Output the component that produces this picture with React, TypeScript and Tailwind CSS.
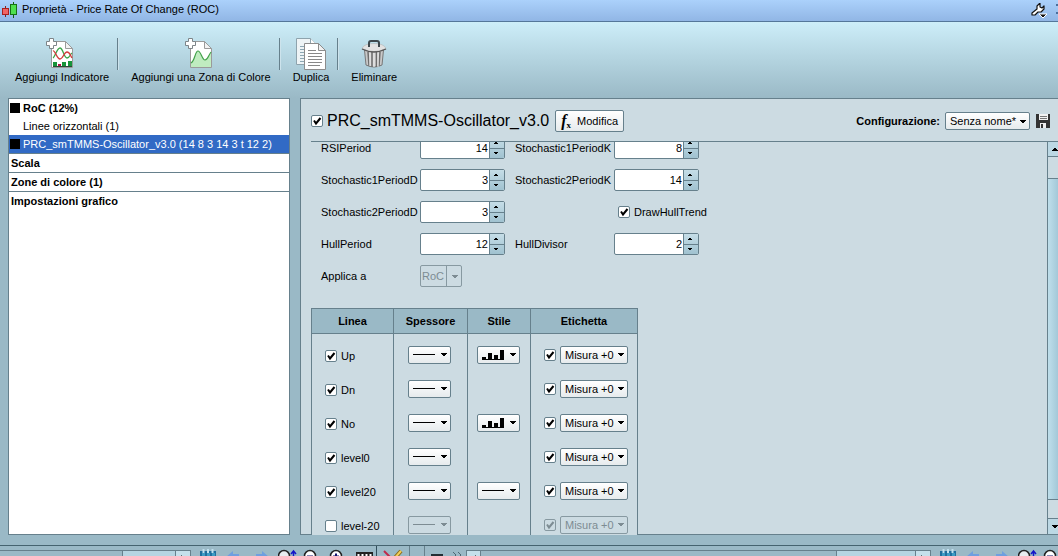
import { useState } from 'react';
import type { ReactNode } from 'react';

const treeItems = [
    { name: 'RoC (12%)', square: true, bold: true },
    { name: 'Linee orizzontali (1)', square: false, bold: false },
    { name: 'PRC_smTMMS-Oscillator_v3.0 (14 8 3 14 3 t 12 2)', square: true, bold: false },
];

const sections = ['Scala', 'Zone di colore (1)', 'Impostazioni grafico'];

const lines = [
    { name: 'Up', enabled: true, style: 'bars' },
    { name: 'Dn', enabled: true, style: '' },
    { name: 'No', enabled: true, style: 'bars' },
    { name: 'level0', enabled: true, style: '' },
    { name: 'level20', enabled: true, style: 'line' },
    { name: 'level-20', enabled: false, style: '' },
];

const Arrow = ({ up = false }: { up?: boolean }) => (
    <svg className="w-[6px] h-[3px] shrink-0" viewBox="0 0 6 3" fill="currentColor" shapeRendering="crispEdges">
        {up ? <path d="M2 0h2v1h1v1h1v1H0V2h1V1h1z" /> : <path d="M0 0h6v1H5v1H4v1H2V2H1V1H0z" />}
    </svg>
);

const PageShape = () => (
    <>
        <path d="M5.500 3.500h14l7 7v19h-21z" fill="#fff" stroke="#9a9a9a" />
        <path d="M19.500 3.500v7h7z" fill="#f2f2f2" stroke="#9a9a9a" />
    </>
);

const PlusShape = () => (
    <path d="M3.500 .5h4v3h3v4h-3v3h-4v-3h-3v-4h3z" fill="#fff" stroke="#7d8589" />
);

const IndicatorIcon = () => (
    <svg className="w-7 h-8 mr-1" viewBox="0 0 28 32" fill="none">
        <PageShape />
        <path d="M7 20c2-1 4-10 7-10s4 10 7 10 3-4 5-5" stroke="#3aa648" strokeWidth="1.300" />
        <path d="M7 13c2-1 4 8 7 8s4-7 7-7 3 3 5 6" stroke="#d23b3b" strokeWidth="1.300" />
        <path d="M7 24h4v5H7zM16 24h4v5h-4zM22 23h4v6h-4z" fill="#16943a" />
        <path d="M12 26h3v3h-3z" fill="#b3144a" />
        <path d="M7 28.500h19" stroke="#274a38" />
        <PlusShape />
    </svg>
);

const ZoneIcon = () => (
    <svg className="w-7 h-8 mr-1" viewBox="0 0 28 32" fill="none">
        <PageShape />
        <path d="M6 25c4-2 4-12 7-12s4 9 7 9 3-4 6-8v15H6z" fill="#c0ecc0" />
        <path d="M6 25c4-2 4-12 7-12s4 9 7 9 3-4 6-8" stroke="#43a14b" strokeWidth="1.200" />
        <PlusShape />
    </svg>
);

const DuplicateIcon = () => (
    <svg className="w-[30px] h-8" viewBox="0 0 30 32" fill="none">
        <path d="M.5 .5h14l6 6v20H.5z" fill="#eef4f6" stroke="#8ea3ad" />
        <path d="M14.500 .5v6h6" fill="#fff" stroke="#8ea3ad" />
        <path d="M4 8.500h6M4 11.500h6M4 14.500h6M4 17.500h6M4 20.500h6M4 23.500h6" stroke="#8da7b3" />
        <path d="M8.500 5.500h14l7 7v19h-21z" fill="#fff" stroke="#8c8c8c" />
        <path d="M22.500 5.500v7h7z" fill="#f0f0f0" stroke="#8c8c8c" />
        <path d="M12 12.500h8M12 15.500h14M12 18.500h14M12 21.500h14M12 24.500h14M12 27.500h12" stroke="#888" />
    </svg>
);

const TrashIcon = () => (
    <svg className="w-[26px] h-8" viewBox="0 0 26 32" fill="none">
        <path d="M3.500 12h19l-1.500 15q-8 4-16 0z" fill="#c9c9c9" stroke="#777" />
        <path d="M7 14l1 14M11 14v15M15.500 14v15M19 14l-1 14" stroke="#6d6d6d" strokeWidth="1.500" />
        <path d="M9 14v14M13 14v15M17 14v15" stroke="#f2f2f2" />
        <path d="M1 10.500q2-5 12-5t12 5q-12 6-24 0z" fill="#e2e2e2" stroke="#aaa" strokeWidth=".5" />
        <path d="M1 11q12 6 24 0" stroke="#555" strokeWidth="1.300" />
        <path d="M8 9V5q0-2 2-2h6q2 0 2 2v4" stroke="#3e484d" strokeWidth="2" />
    </svg>
);

const tools = [
    { label: 'Aggiungi Indicatore', icon: <IndicatorIcon /> },
    { label: 'Aggiungi una Zona di Colore', icon: <ZoneIcon /> },
    { label: 'Duplica', icon: <DuplicateIcon /> },
    { label: 'Eliminare', icon: <TrashIcon /> },
];

const CheckBox = ({ id, on, label, disabled = false }: { id: string; on: boolean; label?: string; disabled?: boolean }) => {
    const [checked, setChecked] = useState(on);

    return (
        <span className="relative flex shrink-0">
            <input
                id={id}
                type="checkbox"
                aria-label={label}
                checked={checked}
                disabled={disabled}
                onChange={() => setChecked(!checked)}
                className="appearance-none w-3 h-3 border border-[#66808c] rounded-[2px] bg-white disabled:bg-transparent disabled:border-[#8799a1]"
            />
            {checked && (
                <svg className={`absolute inset-0 w-3 h-3 pointer-events-none ${disabled ? 'text-[#7d8c93]' : 'text-black'}`} viewBox="0 0 12 12" fill="none">
                    <path d="M3 5.500L5 8.500L9.500 3" stroke="currentColor" strokeWidth="2" />
                </svg>
            )}
        </span>
    );
};

const Spinner = ({ name, start }: { name: string; start: number }) => {
    const [value, setValue] = useState(start);

    return (
        <>
            <label htmlFor={name} className="whitespace-nowrap">{name}</label>
            <div className="flex w-[85px] h-[22px] border border-[#66808c] rounded-[2px] bg-white overflow-hidden">
                <input
                    id={name}
                    value={value}
                    onChange={(e) => setValue(Number(e.target.value) || 0)}
                    className="min-w-0 flex-1 pr-px text-right outline-none"
                />
                <div className="flex flex-col w-[15px] border-l border-[#66808c] bg-linear-to-b from-[#c5dde7] to-[#a0c2d0]">
                    <button aria-label={`${name} +`} onClick={() => setValue(value + 1)} className="flex flex-1 items-center justify-center pr-0.5 border-b border-[#66808c]">
                        <svg className="w-1 h-0.5" viewBox="0 0 4 2" shapeRendering="crispEdges">
                            <path d="M1 0h2v1h1v1H0V1h1z" />
                        </svg>
                    </button>
                    <button aria-label={`${name} -`} onClick={() => setValue(value - 1)} className="flex flex-1 items-center justify-center pr-0.5">
                        <svg className="w-1 h-0.5" viewBox="0 0 4 2" shapeRendering="crispEdges">
                            <path d="M0 0h4v1H3v1H1V1H0z" />
                        </svg>
                    </button>
                </div>
            </div>
        </>
    );
};

const Picker = ({ label, children, disabled = false }: { label: string; children: ReactNode; disabled?: boolean }) => (
    <button
        aria-label={label}
        disabled={disabled}
        className="flex items-center justify-between w-[43px] h-[18px] pl-1 pr-[3px] border border-[#66808c] rounded-[2px] bg-linear-to-b from-white to-[#e6ebed] disabled:bg-none disabled:border-[#8799a1] disabled:text-[#7d8c93]"
    >
        {children}
        <Arrow />
    </button>
);

const LineSample = () => <span className="w-[22px] h-px bg-current"></span>;

const BarsSample = () => (
    <svg className="w-[22px] h-[10px]" viewBox="0 0 22 10" shapeRendering="crispEdges">
        <path d="M0 7h4v3H0zM6 3h4v7H6zM12 5h4v5h-4zM18 0h4v10h-4zM0 9h22v1H0z" />
    </svg>
);

const SmallSelect = ({ id, label, option, size, disabled = false }: { id: string; label?: string; option: string; size: string; disabled?: boolean }) => (
    <span className={`relative flex items-center ${size} ${disabled ? 'text-[#7d8c93]' : 'text-black'}`}>
        <select
            id={id}
            aria-label={label}
            disabled={disabled}
            className="appearance-none w-full h-full pl-1 border border-[#66808c] rounded-[2px] bg-linear-to-b from-white to-[#e6ebed] disabled:bg-none disabled:border-[#8799a1] disabled:opacity-100"
        >
            <option>{option}</option>
        </select>
        <span className="absolute right-1 pointer-events-none">
            <Arrow />
        </span>
    </span>
);

const ChartTools = () => (
    <svg className="w-[78px] h-3 shrink-0" viewBox="0 0 78 12" fill="none">
        <path d="M0 2h16v10H0z" fill="#1f6f9e" />
        <path d="M2 4h3v3H2zM7 4h3v3H7zM12 4h3v3h-3z" fill="#3c9cc4" />
        <path d="M3.500 0v4M8 0v4M12.500 0v4" stroke="#bfe0ee" strokeWidth="2" />
        <path d="M26 8l7-6v3h6v7H28z" fill="#6f9fdf" />
        <path d="M69 8l-7-6v3h-6v7h10z" fill="#6f9fdf" />
    </svg>
);

const ZoomTools = () => (
    <svg className="w-[98px] h-3 shrink-0" viewBox="0 0 98 12" fill="none">
        <circle cx="6" cy="7" r="5.500" fill="#e8edf0" stroke="#222" strokeWidth="1.500" />
        <path d="M15.500 12V3M13 5l2.500-3L18 5" stroke="#1414c8" strokeWidth="1.500" />
        <circle cx="32" cy="7" r="5.500" fill="#fff" stroke="#222" strokeWidth="1.500" />
        <path d="M29 7.500h6" stroke="#14146e" strokeWidth="2" />
        <circle cx="58" cy="7" r="5.500" fill="#fff" stroke="#222" strokeWidth="1.500" />
        <path d="M55 7.500h6M58 4.500v6" stroke="#14146e" strokeWidth="2" />
        <path d="M78 3h17v9H78z" fill="#222" />
        <path d="M80.500 5v7M84.500 5v7M88.500 5v7M92.500 5v7" stroke="#fff" strokeWidth="2" />
    </svg>
);

const BarThumb = ({ size }: { size: string }) => (
    <>
        <span className={`${size} border-l border-r border-[#66808c] bg-[#b5d5e2]`}></span>
        <span className="flex justify-center w-[15px] pt-1 border-r border-[#66808c] bg-[#c5e0eb]">
            <svg className="w-1 h-2" viewBox="0 0 4 8"><path d="M0 0l4 4-4 4z" /></svg>
        </span>
    </>
);

const App = () => {
    const [selected, setSelected] = useState(2);

    return (
        <div
            className="flex flex-col h-screen overflow-hidden bg-[#9ab9c6] text-[11px] leading-[14px] text-black"
            style={{ fontFamily: '"Liberation Sans", Arial, sans-serif' }}
        >
            {/* Title bar */}
            <header className="flex items-center h-[22px] shrink-0 pl-0.5 pb-1 border-b border-[#54779a] bg-linear-to-b from-[#abd1fb] to-[#91b6e5]">
                <svg className="w-4 h-4 mr-1 mt-0.5" viewBox="0 0 16 16" shapeRendering="crispEdges">
                    <path d="M3 4h1v11H3z" fill="#8a1c1c" />
                    <path d="M.5 6.500h6v6h-6z" fill="#f06464" stroke="#a82020" />
                    <path d="M11 0h1v16h-1z" fill="#126012" />
                    <path d="M8.500 2.500h6v10h-6z" fill="#4fe04f" stroke="#187018" />
                </svg>
                <h1>Proprietà - Price Rate Of Change (ROC)</h1>
                <button aria-label="Impostazioni" className="ml-auto mr-2">
                    <svg className="w-4 h-4 mt-1" viewBox="0 0 16 16" fill="none">
                        <path d="M1 10l5-4V3l3-3v4l2 1 2-2v3l-3 3H7l-3 3H1z" fill="#fff" stroke="#111" strokeWidth="1.200" strokeLinejoin="round" />
                        <path d="M8 11h8l-4 4z" fill="#111" stroke="#fff" strokeWidth="1" />
                    </svg>
                </button>
                <svg className="w-[3px] h-3" viewBox="0 0 3 12">
                    <path d="M1 1h2v2H1zM1 9h2v2H1z" fill="#4a6f9c" />
                </svg>
            </header>

            {/* Toolbar */}
            <nav className="flex items-start h-[76px] shrink-0 pt-4 pl-[15px] bg-linear-to-b from-[#cdeef9] to-[#9ab9c6]">
                {tools.map((tool, index) => (
                    <div key={tool.label} className="flex">
                        {index > 0 && <span className="w-0.5 h-8 ml-2 mr-3 border-l border-r border-l-[#66808c] border-r-[#cde3ec]"></span>}
                        <button className="flex flex-col items-center">
                            {tool.icon}
                            <span>{tool.label}</span>
                        </button>
                    </div>
                ))}
            </nav>

            <main className="flex flex-1 min-h-0 gap-2.5 pl-2">
                {/* Tree */}
                <aside className="w-[282px] shrink-0 border border-[#66808c] bg-white">
                    {treeItems.map((item, index) => (
                        <button
                            key={item.name}
                            onClick={() => setSelected(index)}
                            className={`flex items-center gap-[3px] w-full h-[18px] pl-px whitespace-nowrap ${item.bold ? 'font-bold' : ''} ${selected === index ? 'bg-[#316ac5] text-white' : ''}`}
                        >
                            <span className={`w-2.5 h-2.5 ${item.square ? 'bg-black' : ''}`}></span>
                            {item.name}
                        </button>
                    ))}
                    {sections.map((section) => (
                        <button key={section} className="flex items-center w-full h-[19px] pl-0.5 border-t border-[#66808c] font-bold">
                            {section}
                        </button>
                    ))}
                </aside>

                {/* Indicator settings */}
                <section className="flex flex-col flex-1 min-w-0 pl-2.5 border border-r-0 border-[#66808c] bg-[#ccdbe2]">
                    <div className="flex items-center h-[43px] shrink-0 pt-0.5 pr-2 border-b border-[#66808c]">
                        <CheckBox id="indicator" on />
                        <label htmlFor="indicator" className="ml-1 mr-1.5 text-base">PRC_smTMMS-Oscillator_v3.0</label>
                        <button className="flex items-center gap-1.5 h-[22px] px-[5px] border border-[#66808c] rounded-[2px] bg-linear-to-b from-white to-[#e6ebed]">
                            <span className="text-base leading-4 font-bold italic" style={{ fontFamily: '"Liberation Serif", serif' }}>
                                f<sub className="text-[9px] not-italic">x</sub>
                            </span>
                            Modifica
                        </button>
                        <label htmlFor="config" className="ml-auto mr-[5px] font-bold">Configurazione:</label>
                        <SmallSelect id="config" option="Senza nome*" size="w-[85px] h-[18px]" />
                        <button aria-label="Salva" className="ml-1.5">
                            <svg className="w-3.5 h-3.5" viewBox="0 0 14 14" shapeRendering="crispEdges">
                                <path d="M0 0h14v14H0z" fill="#333" />
                                <path d="M3 0h9v6H3z" fill="#f2f2f2" />
                                <path d="M4 2h7v1H4zM4 4h7v1H4z" fill="#777" />
                                <path d="M4 9h6v5H4z" fill="#eee" />
                                <path d="M5 10h2v4H5z" fill="#333" />
                            </svg>
                        </button>
                    </div>

                    <div className="flex flex-1 min-h-0 -mb-px">
                        <div className="flex-1 min-w-0 overflow-hidden">
                            <div className="grid grid-cols-[99px_95px_99px_85px] auto-rows-[22px] gap-y-2.5 items-center -mt-[5px] ml-2.5">
                                <Spinner name="RSIPeriod" start={14} />
                                <Spinner name="Stochastic1PeriodK" start={8} />
                                <Spinner name="Stochastic1PeriodD" start={3} />
                                <Spinner name="Stochastic2PeriodK" start={14} />
                                <Spinner name="Stochastic2PeriodD" start={3} />
                                <div className="flex items-center gap-1 col-start-4 pl-1">
                                    <CheckBox id="draw-hull" on />
                                    <label htmlFor="draw-hull">DrawHullTrend</label>
                                </div>
                                <Spinner name="HullPeriod" start={12} />
                                <Spinner name="HullDivisor" start={2} />
                                <label htmlFor="apply-to">Applica a</label>
                                <div className="relative flex w-[42px] h-[22px] text-[#7d8c93]">
                                    <select id="apply-to" disabled className="appearance-none w-full pl-px border border-[#8799a1] rounded-[2px] disabled:opacity-100">
                                        <option>RoC</option>
                                    </select>
                                    <span className="absolute right-0 flex items-center justify-center w-4 h-full border-l border-[#8799a1] pointer-events-none">
                                        <Arrow />
                                    </span>
                                </div>
                            </div>

                            <table className="w-[327px] mt-[21px] table-fixed border-collapse bg-[#ccdbe2]">
                                <thead>
                                    <tr className="h-[25px] bg-[#9ab9c6]">
                                        <th className="w-[82px] border border-[#66808c]">Linea</th>
                                        <th className="w-[74px] border border-[#66808c]">Spessore</th>
                                        <th className="w-[63px] border border-[#66808c]">Stile</th>
                                        <th className="border border-[#66808c]">Etichetta</th>
                                    </tr>
                                </thead>
                                <tbody>
                                    {lines.map((line, index) => (
                                        <tr key={line.name} className={index === 0 ? 'h-[38px] align-bottom' : 'h-[34px] align-bottom'}>
                                            <td className="pl-[13px] pb-2 border-x border-[#66808c]">
                                                <div className="flex items-center gap-1 h-[18px] pt-0.5">
                                                    <CheckBox id={line.name} on={line.enabled} />
                                                    <label htmlFor={line.name}>{line.name}</label>
                                                </div>
                                            </td>
                                            <td className="pl-3.5 pb-2 border-x border-[#66808c]">
                                                <Picker label={`Spessore ${line.name}`} disabled={!line.enabled}>
                                                    <LineSample />
                                                </Picker>
                                            </td>
                                            <td className="pl-[9px] pb-2 border-x border-[#66808c]">
                                                {line.style && (
                                                    <Picker label={`Stile ${line.name}`}>
                                                        {line.style === 'bars' ? <BarsSample /> : <LineSample />}
                                                    </Picker>
                                                )}
                                            </td>
                                            <td className="pl-[13px] pb-2 border-x border-[#66808c]">
                                                <div className="flex items-center gap-1">
                                                    <CheckBox id={`tag-${line.name}`} label={`Etichetta ${line.name}`} on disabled={!line.enabled} />
                                                    <SmallSelect id={`value-${line.name}`} label={`Misura ${line.name}`} option="Misura +0" size="w-[68px] h-[18px]" disabled={!line.enabled} />
                                                </div>
                                            </td>
                                        </tr>
                                    ))}
                                </tbody>
                            </table>
                        </div>

                        {/* Scroll bar */}
                        <div className="flex flex-col w-[11px] shrink-0 mb-px border-l border-[#66808c] overflow-hidden">
                            <button aria-label="Su" className="flex items-center h-[15px] pl-1 border-b border-[#66808c] bg-[#bcd8e4]">
                                <Arrow up />
                            </button>
                            <span className="h-[21px]"></span>
                            <span className="flex-1 border-y border-[#66808c] bg-linear-to-r from-[#bfdfeb] to-[#a3c8d8]"></span>
                            <span className="h-[18px]"></span>
                            <button aria-label="Giù" className="flex items-center h-4 pl-1 border-t border-[#66808c] bg-[#bcd8e4]">
                                <Arrow />
                            </button>
                        </div>
                    </div>
                </section>
            </main>

            {/* Chart bar of the window below */}
            <footer className="flex h-[11px] shrink-0 mt-2.5 border-t border-[#45636f] overflow-hidden">
                <div className="flex w-[191px] shrink-0 mt-1 border-t border-[#66808c]">
                    <span className="flex-1"></span>
                    <BarThumb size="w-[54px]" />
                </div>
                <div className="flex shrink-0 pl-[9px] pt-[3px]">
                    <ChartTools />
                    <ZoomTools />
                </div>
                <span className="w-px shrink-0 bg-[#314f5c]"></span>
                <svg className="w-[32px] h-3 shrink-0 mt-[3px]" viewBox="0 0 32 12" fill="none">
                    <path d="M7 2l10 10" stroke="#c02a4a" strokeWidth="2" />
                    <path d="M24 2L15 12" stroke="#8b6a18" strokeWidth="4" />
                    <path d="M24 2L15 12" stroke="#f2d05a" strokeWidth="2" />
                </svg>
                <span className="w-[16px] shrink-0 border-x border-[#66808c]"></span>
                <svg className="w-[41px] h-3 shrink-0" viewBox="0 0 41 12" fill="none">
                    <path d="M6 9h12" stroke="#222e34" strokeWidth="2" />
                    <path d="M28 6l3 3-3 3M33 6l3 3-3 3" stroke="#4d6873" />
                </svg>
                <div className="flex flex-1 mt-1 border-t border-[#66808c]">
                    <span className="flex justify-center w-[15px] pt-1 border-x border-[#66808c] bg-[#c5e0eb]">
                        <svg className="w-1 h-2" viewBox="0 0 4 8"><path d="M4 0L0 4l4 4z" /></svg>
                    </span>
                    <span className="flex-1"></span>
                    <BarThumb size="w-[80px]" />
                </div>
                <div className="flex w-[127px] shrink-0 pl-[9px] pt-[3px] overflow-hidden">
                    <ChartTools />
                    <ZoomTools />
                </div>
            </footer>
        </div>
    );
};

export default App;
